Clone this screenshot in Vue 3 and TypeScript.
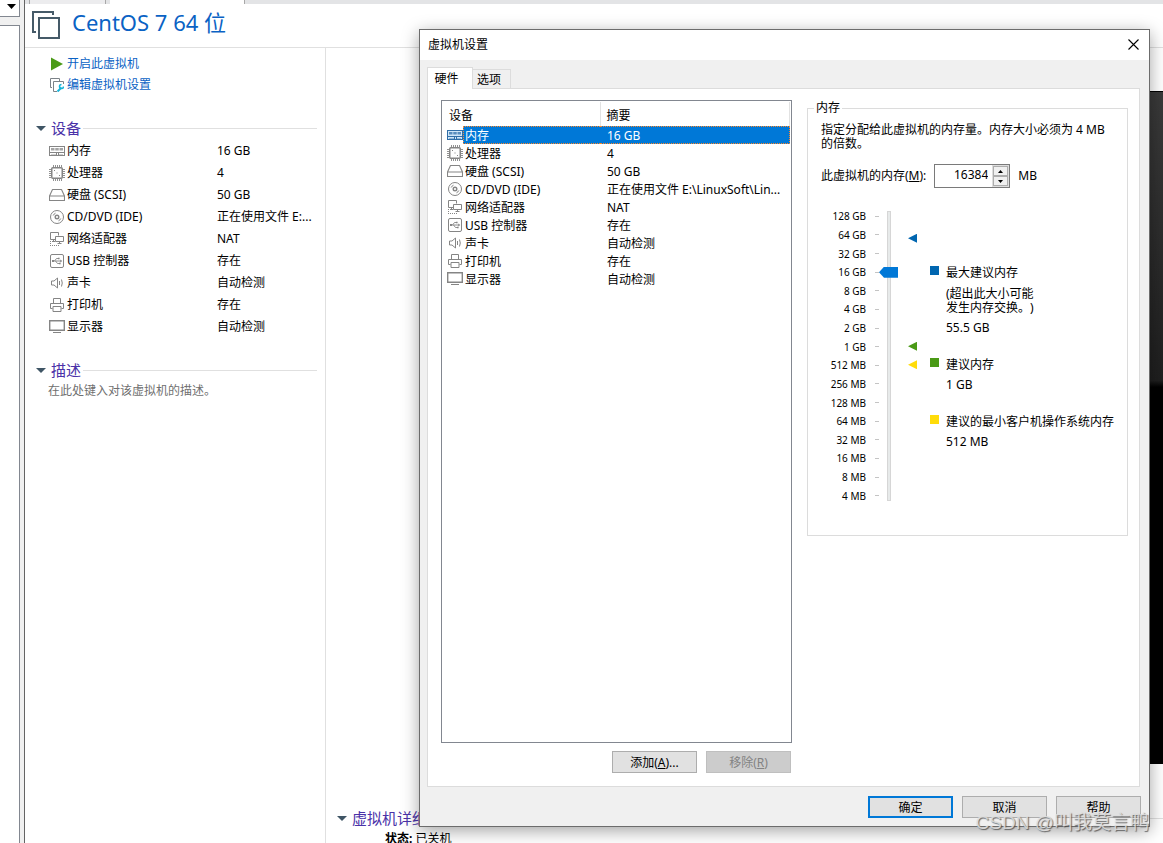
<script setup lang="ts">
import { ref } from 'vue'

interface Device {
  icon: string
  name: string
  brief: string
  summary: string
}

const devices: Device[] = [
  { icon: 'memory', name: '内存', brief: '16 GB', summary: '16 GB' },
  { icon: 'cpu', name: '处理器', brief: '4', summary: '4' },
  { icon: 'disk', name: '硬盘 (SCSI)', brief: '50 GB', summary: '50 GB' },
  { icon: 'cd', name: 'CD/DVD (IDE)', brief: '正在使用文件 E:...', summary: '正在使用文件 E:\\LinuxSoft\\Lin...' },
  { icon: 'network', name: '网络适配器', brief: 'NAT', summary: 'NAT' },
  { icon: 'usb', name: 'USB 控制器', brief: '存在', summary: '存在' },
  { icon: 'sound', name: '声卡', brief: '自动检测', summary: '自动检测' },
  { icon: 'printer', name: '打印机', brief: '存在', summary: '存在' },
  { icon: 'display', name: '显示器', brief: '自动检测', summary: '自动检测' },
]

const scale = [
  '128 GB', '64 GB', '32 GB', '16 GB', '8 GB', '4 GB', '2 GB', '1 GB',
  '512 MB', '256 MB', '128 MB', '64 MB', '32 MB', '16 MB', '8 MB', '4 MB',
]

// Position of each marker, in steps down from the top of the scale.
const markers = [
  { kind: 'max', step: 1.2 },
  { kind: 'rec', step: 7 },
  { kind: 'min', step: 8 },
]

const selected = ref(0)
const level = ref(12)
const memory = ref('16384')

function markerTop(step: number): string {
  return ((step + 0.5) / scale.length) * 100 + '%'
}

function setLevel() {
  memory.value = String(4 * 2 ** Number(level.value))
}

function bump(delta: number) {
  memory.value = String(Math.max(4, Number(memory.value) + delta))
}
</script>

<template>
  <svg class="sprite" aria-hidden="true">
    <symbol id="i-memory" viewBox="0 0 16 16">
      <rect x="0.5" y="3.5" width="15" height="9" fill="none" stroke="currentColor" />
      <path d="M2 5h3.500v2.500h-3.500zM6.250 5h3.500v2.500h-3.500zM10.500 5h3.500v2.500h-3.500z" fill="currentColor" opacity="0.75" />
      <path d="M1 9.500h14M7.500 10v2.500M9.500 10v2.500" stroke="currentColor" fill="none" />
      <path d="M2 11.500h5M10 11.500h4" stroke="currentColor" fill="none" opacity="0.4" />
    </symbol>
    <symbol id="i-cpu" viewBox="0 0 16 16">
      <rect x="2.750" y="2.750" width="10.500" height="10.500" rx="1" fill="none" stroke="currentColor" stroke-width="1.500" />
      <path d="M4.500 0v2M6.500 0v2M8.500 0v2M10.500 0v2M12.500 0v2M4.500 14v2M6.500 14v2M8.500 14v2M10.500 14v2M12.500 14v2M0 4.500h2M0 6.500h2M0 8.500h2M0 10.500h2M0 12.500h2M14 4.500h2M14 6.500h2M14 8.500h2M14 10.500h2M14 12.500h2" stroke="currentColor" stroke-width="0.900" />
      <path d="M5 5h1v1h-1zM10 10h1v1h-1zM7.500 7.500h1v1h-1z" fill="currentColor" />
    </symbol>
    <symbol id="i-disk" viewBox="0 0 16 16">
      <path d="M3.500 2.500h9l3 6.500h-15zM0.500 9h15v4.500h-15z" fill="none" stroke="currentColor" stroke-width="1.100" stroke-linejoin="round" />
    </symbol>
    <symbol id="i-cd" viewBox="0 0 16 16">
      <circle cx="8" cy="8" r="6.500" fill="none" stroke="currentColor" />
      <circle cx="8" cy="8" r="1.800" fill="none" stroke="currentColor" stroke-width="1.400" />
      <path d="M4.200 6.500a4.200 4.200 0 0 1 2.300-2.300M11.800 9.500a4.200 4.200 0 0 1-2.300 2.300" fill="none" stroke="currentColor" />
    </symbol>
    <symbol id="i-network" viewBox="0 0 16 16">
      <path d="M6 8.500H1.500v-7h8v3M4.500 8.500v1.500M3 10.500h3" fill="none" stroke="currentColor" />
      <path d="M6.500 5.500h8v5h-8zM10.500 10.500v2M8.500 12.500h4" fill="none" stroke="currentColor" />
      <path d="M1.500 10v5M1 14.500h9" stroke="currentColor" fill="none" stroke-dasharray="1 1" />
    </symbol>
    <symbol id="i-usb" viewBox="0 0 16 16">
      <rect x="1.500" y="1.500" width="13" height="13" rx="1.500" fill="none" stroke="currentColor" />
      <path d="M4 8h8M5.500 8l2-2.500h2M6.500 8l2 2.500h2" fill="none" stroke="currentColor" stroke-width="0.900" />
      <path d="M3 7h2v2h-2zM9 4.700h1.600v1.600h-1.600zM10 9.700h1.600v1.600h-1.600zM11.300 6.600l2 1.400-2 1.400z" fill="currentColor" />
    </symbol>
    <symbol id="i-sound" viewBox="0 0 16 16">
      <path d="M2.500 6h2.500l3.500-3v10l-3.500-3h-2.500z" fill="none" stroke="currentColor" />
      <path d="M10.500 6v4M12.500 4.500q1.500 3.500 0 7" fill="none" stroke="currentColor" />
    </symbol>
    <symbol id="i-printer" viewBox="0 0 16 16">
      <path d="M4.500 6.500v-5h7v5M3.500 11.500h-2v-5h13v5h-2M4 9.500h8v5h-8z" fill="none" stroke="currentColor" />
    </symbol>
    <symbol id="i-display" viewBox="0 0 16 16">
      <path d="M0.700 1.700h14.600v9.600h-14.600z" fill="none" stroke="currentColor" stroke-width="1.400" />
      <path d="M4 13.500h8" stroke="currentColor" />
    </symbol>
  </svg>

  <div class="app">
    <div class="library">
      <div class="library-search"><svg width="9" height="5" viewBox="0 0 9 5"><path d="M0 0h9l-4.500 5z" fill="#000" /></svg></div>
      <div class="library-tree"></div>
    </div>

    <div class="workspace">
      <div class="tabstrip">
        <span class="tab-home"></span>
        <span class="tab-vm"></span>
      </div>
      <header class="vm-header">
        <svg width="30" height="30" viewBox="0 0 30 30" fill="none" stroke="#455a68" stroke-width="2">
          <path d="M4 21H1V1h20v3" />
          <rect x="7" y="7" width="20" height="20" />
        </svg>
        <h1>CentOS 7 64 位</h1>
      </header>

      <div class="vm-body">
        <aside class="side">
          <nav class="actions">
            <a href="#power-on">
              <svg width="14" height="14" viewBox="0 0 14 14"><path d="M1 0.500l12 6.500-12 6.500z" fill="#4a9a16" /></svg>
              开启此虚拟机
            </a>
            <a href="#edit">
              <svg width="14" height="14" viewBox="0 0 14 14" fill="none">
                <path d="M2 9.500H.5v-9h9V3" stroke="#7c8288" />
                <path d="M7 13.500H3.500v-10h10V6" stroke="#7c8288" />
                <path d="M7.500 13.500l4-4" stroke="#18b4d8" stroke-width="2" />
                <path d="M13.500 8.500a2 2 0 1 1-2-2" stroke="#18b4d8" stroke-width="1.500" />
              </svg>
              编辑虚拟机设置
            </a>
          </nav>

          <section class="block">
            <h2><svg class="caret" viewBox="0 0 10 5"><path d="M0 0h10l-5 5z" fill="#3f5565" /></svg>设备</h2>
            <table class="brief">
              <tbody>
                <tr v-for="d in devices" :key="d.icon">
                  <th scope="row"><span class="brief-name"><svg class="icon"><use :href="'#i-' + d.icon" /></svg>{{ d.name }}</span></th>
                  <td>{{ d.brief }}</td>
                </tr>
              </tbody>
            </table>
          </section>

          <section class="block">
            <h2><svg class="caret" viewBox="0 0 10 5"><path d="M0 0h10l-5 5z" fill="#3f5565" /></svg>描述</h2>
            <p class="note">在此处键入对该虚拟机的描述。</p>
          </section>
        </aside>

        <main class="main">
          <div class="screen"></div>
          <section class="details">
            <h2><svg class="caret" viewBox="0 0 10 5"><path d="M0 0h10l-5 5z" fill="#3f5565" /></svg>虚拟机详细信息</h2>
            <p><b>状态:</b> 已关机</p>
          </section>
        </main>
      </div>
    </div>

    <div class="dialog" role="dialog" aria-labelledby="dialog-title">
      <div class="titlebar">
        <span id="dialog-title">虚拟机设置</span>
        <button class="close" type="button" aria-label="关闭">
          <svg width="11" height="11" viewBox="0 0 11 11"><path d="M0.500 0.500l10 10M10.500 0.500l-10 10" stroke="#000" stroke-width="1.100" /></svg>
        </button>
      </div>

      <div class="tabs" role="tablist">
        <button class="tab active" type="button" role="tab" aria-selected="true">硬件</button>
        <button class="tab" type="button" role="tab" aria-selected="false">选项</button>
      </div>

      <div class="panel">
        <div class="hardware">
          <div class="list">
            <table>
              <colgroup><col class="col-name"><col></colgroup>
              <thead>
                <tr><th scope="col">设备</th><th scope="col">摘要</th></tr>
              </thead>
              <tbody>
                <tr v-for="(d, i) in devices" :key="d.icon" :class="{ selected: i === selected }" @click="selected = i">
                  <td>
                    <div class="name-cell">
                      <svg class="icon"><use :href="'#i-' + d.icon" /></svg>
                      <span class="name">{{ d.name }}</span>
                    </div>
                  </td>
                  <td><span class="summary">{{ d.summary }}</span></td>
                </tr>
              </tbody>
            </table>
          </div>
          <div class="list-actions">
            <button class="btn" type="button">添加(<u>A</u>)...</button>
            <button class="btn" type="button" disabled>移除(<u>R</u>)</button>
          </div>
        </div>

        <fieldset class="group">
          <legend>内存</legend>
          <p class="hint">指定分配给此虚拟机的内存量。内存大小必须为 4 MB 的倍数。</p>
          <div class="amount">
            <label for="memory">此虚拟机的内存(<u>M</u>):</label>
            <div class="spin">
              <input id="memory" v-model="memory" type="text">
              <div class="spin-buttons">
                <button type="button" aria-label="增加" @click="bump(4)"><svg width="5" height="3" viewBox="0 0 5 3"><path d="M0 3h5l-2.500-3z" /></svg></button>
                <button type="button" aria-label="减少" @click="bump(-4)"><svg width="5" height="3" viewBox="0 0 5 3"><path d="M0 0h5l-2.500 3z" /></svg></button>
              </div>
            </div>
            <span>MB</span>
          </div>

          <div class="chart">
            <ol class="scale">
              <li v-for="s in scale" :key="s">{{ s }}</li>
            </ol>
            <input v-model="level" class="slider" type="range" min="0" max="15" step="1" aria-label="内存" @input="setLevel">
            <div class="markers">
              <i v-for="m in markers" :key="m.kind" :class="m.kind" :style="{ top: markerTop(m.step) }"></i>
            </div>
            <dl class="legend">
              <dt><i class="max"></i>最大建议内存</dt>
              <dd class="why">(超出此大小可能<br>发生内存交换。)</dd>
              <dd>55.5 GB</dd>
              <dt><i class="rec"></i>建议内存</dt>
              <dd>1 GB</dd>
              <dt><i class="min"></i>建议的最小客户机操作系统内存</dt>
              <dd>512 MB</dd>
            </dl>
          </div>
        </fieldset>
      </div>

      <div class="footer">
        <button class="btn primary" type="button">确定</button>
        <button class="btn" type="button">取消</button>
        <button class="btn" type="button">帮助</button>
      </div>
    </div>

    <div class="watermark">CSDN @叫我莫言鸭</div>
  </div>
</template>

<style>
body {
  margin: 0;
  background: #fff;
}
</style>

<style scoped>
* {
  box-sizing: border-box;
}

.sprite {
  position: absolute;
  width: 0;
  height: 0;
}

.app {
  position: relative;
  display: flex;
  height: 100vh;
  min-height: 640px;
  overflow: hidden;
  background: #f0f0f0;
  color: #000;
  font: 12px/18px "Noto Sans", "Noto Sans CJK SC", sans-serif;
  text-spacing-trim: space-all;
}

button,
input {
  font: inherit;
  color: inherit;
}

h1, h2, p, dl, dd, ol {
  margin: 0;
  padding: 0;
}

.icon {
  flex: none;
  width: 16px;
  height: 16px;
  color: #858585;
}

/* Library strip */
.library {
  display: flex;
  flex-direction: column;
  gap: 8px;
  width: 20px;
  margin-right: 4px;
}

.library-search {
  height: 17px;
  padding: 4px 3px 0 0;
  border: solid #828790;
  border-width: 0 1px 1px 0;
  background: #fff;
  text-align: right;
  line-height: 0;
}

.library-tree {
  flex: 1;
  border: solid #828790;
  border-width: 1px 1px 0 0;
  background: #fff;
}

/* Virtual machine page */
.workspace {
  flex: 1;
  display: flex;
  flex-direction: column;
  min-width: 0;
  border-left: 1px solid #646464;
  background: #fff;
}

.tabstrip {
  display: flex;
  gap: 4px;
  height: 4px;
  padding-left: 4px;
  background: #e3e4e6;
}

.tab-home {
  width: 77px;
  border: solid #a8a8a8;
  border-width: 0 1px;
  background: #ececee;
}

.tab-vm {
  width: 135px;
  border-right: 1px solid #a8a8a8;
  background: #fff;
}

.vm-header {
  display: flex;
  align-items: center;
  gap: 10px;
  height: 44px;
  padding-left: 7px;
  border-bottom: 1px solid #e0e0e0;
}

.vm-header h1 {
  color: #0a62c4;
  font-size: 22px;
  font-weight: 400;
  line-height: 36px;
  padding-bottom: 7px;
}

.vm-body {
  flex: 1;
  display: flex;
  min-height: 0;
}

.side {
  width: 301px;
  border-right: 1px solid #e0e0e0;
}

.actions {
  display: flex;
  flex-direction: column;
  padding: 5px 0 0 25px;
}

.actions a {
  display: flex;
  align-items: center;
  gap: 3px;
  height: 21px;
  color: #0a62c4;
  text-decoration: none;
}

.block {
  padding: 22px 8px 0 11px;
}

.block + .block {
  padding-top: 21px;
}

h2 {
  display: flex;
  align-items: center;
  height: 22px;
  color: #4a32a8;
  font-size: 15px;
  font-weight: 400;
}

h2::after {
  content: "";
  flex: 1;
  height: 1px;
  margin-left: 2px;
  background: #e0e0e0;
}

.caret {
  width: 10px;
  height: 5px;
  margin-right: 5px;
}

.brief {
  width: 100%;
  margin-top: 1px;
  border-collapse: collapse;
  table-layout: fixed;
}

.brief th,
.brief td {
  height: 22px;
  padding: 0;
  font-weight: 400;
  text-align: left;
  white-space: nowrap;
}

.brief th {
  width: 181px;
}

.brief-name {
  display: flex;
  align-items: center;
  gap: 2px;
  padding-left: 13px;
}

.note {
  padding: 1px 0 0 12px;
  color: #6f6f6f;
}

.main {
  flex: 1;
  display: flex;
  flex-direction: column;
  min-width: 0;
  padding: 43px 0 0 11px;
}

.screen {
  flex: 1;
  min-height: 0;
  margin-left: 163px;
  border: solid #000;
  border-width: 1px 0;
  background: linear-gradient(#3a3a3a, #1f1f1f 43%, #000 44%);
}

.details {
  height: 79px;
  padding-top: 43px;
}

.details p {
  padding: 1px 0 0 48px;
}

/* Settings dialog */
.dialog {
  position: absolute;
  top: 29px;
  right: 13px;
  bottom: 16px;
  left: 419px;
  display: flex;
  flex-direction: column;
  border: 1px solid #6c6c6c;
  background: #f0f0f0;
  box-shadow: 0 4px 16px rgba(0, 0, 0, 0.36);
}

.titlebar {
  display: flex;
  align-items: center;
  justify-content: space-between;
  height: 30px;
  padding: 0 10px 0 8px;
  background: #fff;
}

.close {
  display: flex;
  padding: 0 0 2px;
  border: 0;
  background: none;
}

.tabs {
  display: flex;
  align-items: flex-end;
  height: 28px;
  padding-left: 7px;
}

.tab {
  height: 19px;
  width: 38px;
  padding: 0 5px 0 0;
  border: solid #dcdcdc;
  border-width: 1px 1px 0 0;
  background: #f0f0f0;
  line-height: 20px;
}

.tab.active {
  z-index: 1;
  width: 46px;
  height: 22px;
  margin-bottom: -1px;
  padding-right: 7px;
  border-left-width: 1px;
  background: #fff;
}

.panel {
  flex: 1;
  display: flex;
  gap: 15px;
  min-height: 0;
  margin: 0 9px 0 7px;
  padding: 11px 11px 13px 13px;
  border: 1px solid #dcdcdc;
  background: #fff;
}

.hardware {
  flex: 1;
  display: flex;
  flex-direction: column;
  min-width: 0;
}

.list {
  flex: 1;
  min-height: 0;
  padding: 1px 1px 0 0;
  border: 1px solid #828790;
}

.list table {
  width: 100%;
  border-collapse: collapse;
  table-layout: fixed;
}

.col-name {
  width: 158px;
}

.list th {
  height: 24px;
  padding: 4px 0 0 7px;
  border-right: 1px solid #e2e2e2;
  font-weight: 400;
  text-align: left;
}

.list th + th {
  padding-left: 6px;
}

.list td {
  height: 18px;
  padding: 0;
}

.name-cell {
  display: flex;
  align-items: center;
  height: 18px;
  padding-left: 5px;
}

.name,
.summary {
  display: block;
  height: 18px;
  line-height: 20px;
  white-space: nowrap;
}

.name {
  flex: 1;
  padding-left: 2px;
}

.summary {
  padding-left: 7px;
}

.selected .name,
.selected .summary {
  border: dotted #ff8728;
  border-width: 1px 0;
  background: #0078d7;
  color: #fff;
  line-height: 18px;
}

.selected .name {
  padding-left: 1px;
  border-left-width: 1px;
}

.selected .summary {
  border-right-width: 1px;
}

.selected .icon {
  color: #2f6ea8;
  background: linear-gradient(transparent 3px, #cfe6f8 3px, #cfe6f8 13px, transparent 13px);
}

.list-actions {
  display: flex;
  justify-content: flex-end;
  gap: 9px;
  padding: 8px 1px 0 0;
}

.btn {
  width: 85px;
  height: 22px;
  padding: 0;
  border: 1px solid #adadad;
  background: #e1e1e1;
  line-height: 22px;
}

.btn:disabled {
  border-color: #bfbfbf;
  background: #ccc;
  color: #838383;
}

.btn.primary {
  border: 2px solid #0078d7;
  line-height: 20px;
}

.footer {
  display: flex;
  justify-content: flex-end;
  gap: 9px;
  padding: 9px 8px 8px;
}

/* Memory page */
.group {
  width: 321px;
  height: 436px;
  min-width: 0;
  margin: 0;
  padding: 0 12px 0 13px;
  border: 1px solid #dcdcdc;
}

.group legend {
  margin-left: -7px;
  padding: 0 2px;
  line-height: 16px;
}

.hint {
  padding: 7px 6px 0 0;
  line-height: 14px;
}

.amount {
  display: flex;
  align-items: center;
  gap: 8px;
  padding-top: 13px;
}

.spin {
  display: flex;
  width: 76px;
  height: 24px;
  border: 1px solid #7a7a7a;
}

.spin input {
  flex: 1;
  min-width: 0;
  padding: 0 4px 2px;
  border: 0;
  outline: 0;
  background: #fff;
  text-align: right;
}

.spin-buttons {
  display: flex;
  flex-direction: column;
  width: 17px;
  padding: 1px;
  background: #ddd;
}

.spin-buttons button {
  flex: 1;
  display: flex;
  align-items: center;
  justify-content: center;
  padding: 0;
  border: 1px solid #adadad;
  background: #f0f0f0;
}

.chart {
  display: flex;
  height: 298px;
  margin-top: 19px;
}

.scale {
  display: flex;
  flex-direction: column;
  width: 58px;
  list-style: none;
  font-size: 10px;
}

.scale li {
  flex: 1;
  display: flex;
  align-items: center;
  justify-content: flex-end;
  line-height: 16px;
}

.scale li::after {
  content: "";
  width: 4px;
  height: 1px;
  margin-left: 9px;
  background: #c4c4c4;
}

.slider {
  appearance: none;
  writing-mode: vertical-lr;
  direction: rtl;
  width: 19px;
  height: 290px;
  margin: 4px 0 0;
  background: linear-gradient(#e7eaea, #e7eaea) 9px 1px / 2px 288px no-repeat, linear-gradient(#d6d6d6, #d6d6d6) 8px 0 / 4px 290px no-repeat;
}

.slider::-webkit-slider-thumb {
  appearance: none;
  width: 19px;
  height: 11px;
  border: 0;
  border-radius: 0;
  background: #0078d7;
  clip-path: polygon(0 50%, 5px 0, 100% 0, 100% 100%, 5px 100%);
}

.markers {
  position: relative;
  width: 32px;
}

.markers i {
  position: absolute;
  left: 10px;
  width: 9px;
  height: 9px;
  margin-top: -5px;
  clip-path: polygon(0 50%, 100% 0, 100% 100%);
}

.max {
  background: #0066b0;
}

.rec {
  background: #4a9a16;
}

.min {
  background: #ffdc0a;
}

.legend {
  padding-top: 56px;
  white-space: nowrap;
}

.legend dt {
  display: flex;
  align-items: center;
  gap: 7px;
  height: 20px;
}

.legend dt i {
  width: 9px;
  height: 9px;
  margin-bottom: 5px;
}

.legend dd {
  height: 20px;
  padding-left: 16px;
  line-height: 20px;
}

.legend .why {
  height: 35px;
  padding-top: 4px;
  line-height: 14px;
}

.legend dd + dt {
  margin-top: 17px;
}

.watermark {
  position: absolute;
  right: 14px;
  bottom: 5px;
  color: rgba(225, 225, 225, 0.85);
  font-family: "Liberation Sans", "Noto Sans CJK SC", sans-serif;
  font-size: 19px;
  line-height: 30px;
  text-shadow: 1px 1px 1px rgba(70, 70, 70, 0.8);
  pointer-events: none;
}
</style>
